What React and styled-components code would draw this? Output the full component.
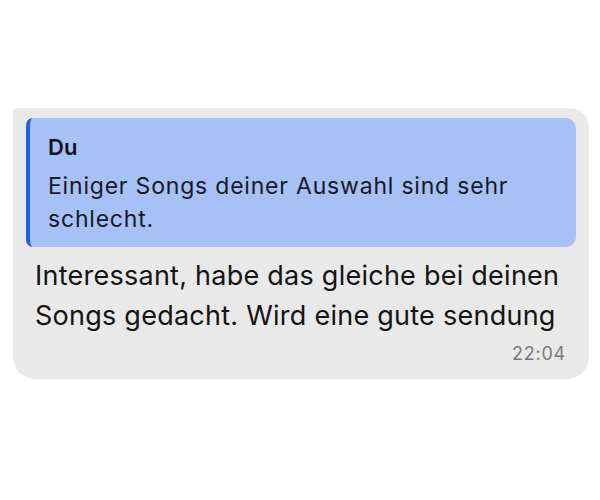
import React from "react";
import styled, { createGlobalStyle } from "styled-components";

const GlobalStyle = createGlobalStyle`
  html, body {
    margin: 0;
    padding: 0;
    background: #ffffff;
  }
  body {
    font-family: Inter, "Noto Sans", "Liberation Sans", sans-serif;
    color: #121212;
  }
`;

const Page = styled.div`
  width: 600px;
  height: 500px;
  padding: 108px 11px 0 13px;
  box-sizing: border-box;
`;

const Bubble = styled.div`
  background: #e9e9e9;
  border-radius: 4px 20px 22px 22px;
  padding: 10px 13px 13px 13px;
  display: flex;
  flex-direction: column;
`;

const Quote = styled.div`
  background: #a7c0f5;
  border-left: 4px solid #2462dc;
  border-radius: 7px 10px 10px 7px;
  padding: 15px 16px 11px 18px;
`;

const Author = styled.div`
  font-size: 22px;
  line-height: 28px;
  font-weight: 600;
  color: #101521;
`;

const QuoteText = styled.div`
  margin-top: 9px;
  font-size: 23px;
  line-height: 33px;
  letter-spacing: 0.8px;
  color: #151a26;
`;

const Message = styled.div`
  margin-top: 9px;
  padding: 0 9px;
  font-size: 27px;
  line-height: 40px;
  letter-spacing: 0.25px;
  color: #141414;
`;

const Time = styled.div`
  align-self: flex-end;
  margin-top: 6px;
  padding-right: 10px;
  font-size: 18px;
  line-height: 24px;
  letter-spacing: 0.8px;
  color: #7a7a7a;
`;

export default function App() {
  return (
    <>
      <GlobalStyle />
      <Page>
        <Bubble>
          <Quote>
            <Author>Du</Author>
            <QuoteText>Einiger Songs deiner Auswahl sind sehr schlecht.</QuoteText>
          </Quote>
          <Message>
            Interessant, habe das gleiche bei deinen Songs gedacht. Wird eine
            gute sendung
          </Message>
          <Time>22:04</Time>
        </Bubble>
      </Page>
    </>
  );
}
